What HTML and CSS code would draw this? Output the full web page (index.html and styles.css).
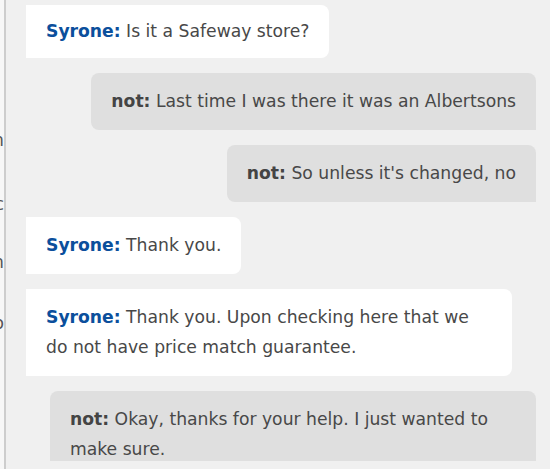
FILE: index.html
```html
<!DOCTYPE html>
<html>
<head>
<meta charset="utf-8">
<link rel="stylesheet" href="styles.css">
</head>
<body>
<div class="app">
  <div class="side">
    <div class="side-line l1">can</div>
    <div class="side-line l2">abc</div>
    <div class="side-line l3">lin</div>
    <div class="side-line l4">go</div>
  </div>
  <div class="chat">
    <div class="msg agent first"><b class="name">Syrone:</b> Is it a Safeway store?</div>
    <div class="msg user"><b class="name">not:</b> Last time I was there it was an Albertsons</div>
    <div class="msg user"><b class="name">not:</b> So unless it's changed, no</div>
    <div class="msg agent"><b class="name">Syrone:</b> Thank you.</div>
    <div class="msg agent"><b class="name">Syrone:</b> Thank you. Upon checking here that we do not have price match guarantee.</div>
    <div class="msg user"><b class="name">not:</b> Okay, thanks for your help. I just wanted to make sure.</div>
  </div>
</div>
</body>
</html>
```

FILE: styles.css
```css
html, body {
  margin: 0;
  padding: 0;
  background: #f0f0f0;
}
.app {
  display: flex;
  width: 550px;
  height: 469px;
  overflow: hidden;
  font-family: "DejaVu Sans", sans-serif;
  font-size: 17.2px;
  color: #484848;
}
.side {
  width: 4px;
  flex: none;
  background: #f7f7f7;
  border-right: 2px solid #cdcdcd;
  overflow: hidden;
  direction: rtl;
  display: flex;
  flex-direction: column;
  color: #555;
}
.side-line {
  white-space: nowrap;
  text-align: right;
  line-height: 20px;
}
.l1 { margin-top: 130px; }
.l2 { margin-top: 44px; }
.l3 { margin-top: 38px; }
.l4 { margin-top: 41px; }
.chat {
  flex: 1;
  height: 461px;
  overflow: hidden;
  display: flex;
  flex-direction: column;
  gap: 15px;
  padding: 5px 14px 0 20px;
  box-sizing: border-box;
}
.msg {
  max-width: 446px;
  padding: 13px 20px 14px;
  line-height: 30px;
  flex: none;
}
.msg.first {
  padding-top: 11px;
  padding-bottom: 12px;
}
.agent {
  align-self: flex-start;
  background: #ffffff;
  border-radius: 0 8px 8px 0;
}
.user {
  align-self: flex-end;
  background: #dfdfdf;
  border-radius: 8px 8px 0 8px;
}
.name {
  font-weight: bold;
}
.agent .name {
  color: #0b4f9c;
}
.user .name {
  color: #444;
}
```
